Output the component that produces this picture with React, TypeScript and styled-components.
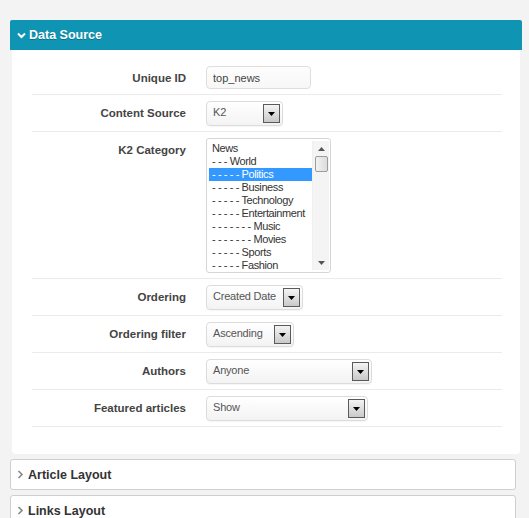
import React from 'react';
import styled, { createGlobalStyle } from 'styled-components';

const GlobalStyle = createGlobalStyle`
  html, body {
    margin: 0;
    padding: 0;
    background: #f3f3f3;
    font-family: "Liberation Sans", Arial, sans-serif;
  }
`;

const Page = styled.div`
  padding: 20px 7px 0 10px;
  height: 518px;
  overflow: hidden;
  box-sizing: border-box;
`;

const SectionHeader = styled.div`
  height: 30px;
  background: #1094b3;
  border-radius: 2px 2px 0 0;
  display: flex;
  align-items: center;
  gap: 3px;
  padding-left: 7px;
  color: #fff;
  font-weight: bold;
  font-size: 12.5px;
  text-shadow: 0 1px 0 rgba(0, 0, 0, 0.25);
`;

const SectionBody = styled.div`
  margin: 0 2px;
  background: #fff;
  border-radius: 0 0 4px 4px;
  padding: 10px 18px 27px 20px;
`;

const Row = styled.div`
  display: grid;
  grid-template-columns: 154px 1fr;
  column-gap: 20px;
  align-items: start;
  padding: 6px 0 5px;
  border-bottom: 1px solid #ebebeb;
`;

const Label = styled.div`
  text-align: right;
  font-weight: bold;
  font-size: 11.5px;
  line-height: 14px;
  color: #444;
  padding-top: 5px;
`;

const TextInput = styled.div`
  width: 105px;
  height: 23px;
  box-sizing: border-box;
  border: 1px solid #dedede;
  border-radius: 4px;
  background: linear-gradient(#fdfdfd, #f7f7f7);
  font-size: 11px;
  color: #444;
  padding: 5px 0 0 6px;
`;

const Select = styled.div<{ $width: number }>`
  width: ${p => p.$width}px;
  height: 25px;
  box-sizing: border-box;
  border: 1px solid #dcdcdc;
  border-radius: 4px;
  background: linear-gradient(#ffffff, #f3f3f3);
  box-shadow: 0 1px 1px rgba(0, 0, 0, 0.04);
  display: flex;
  align-items: center;
  justify-content: space-between;
  padding: 0 2px 0 6px;
  font-size: 11px;
  letter-spacing: -0.2px;
  color: #555;
`;

const SelectValue = styled.span`
  margin-top: -3px;
`;

const DropButton = styled.div`
  width: 17px;
  height: 19px;
  box-sizing: border-box;
  border: 1px solid #5a5a5a;
  background: linear-gradient(#f4f4f4, #c9c9c9);
  display: flex;
  align-items: center;
  justify-content: center;
`;

const ListBox = styled.div`
  width: 125px;
  height: 135px;
  box-sizing: border-box;
  border: 1px solid #d6d6d6;
  border-radius: 3px;
  background: #fff;
  display: flex;
  padding: 2px 1px 2px 2px;
`;

const ListItems = styled.div`
  flex: 1;
  overflow: hidden;
  padding-top: 1px;
`;

const ListItem = styled.div<{ $selected?: boolean }>`
  height: 13px;
  line-height: 13px;
  font-size: 11px;
  letter-spacing: -0.4px;
  padding-left: 3px;
  white-space: nowrap;
  color: ${p => (p.$selected ? '#fff' : '#333')};
  background: ${p => (p.$selected ? '#3399ff' : 'transparent')};
`;

const ScrollBar = styled.div`
  width: 16px;
  background: #f4f4f4;
  border-left: 1px solid #f0f0f0;
  display: flex;
  flex-direction: column;
  align-items: center;
`;

const ScrollArrow = styled.div`
  height: 15px;
  display: flex;
  align-items: center;
  justify-content: center;
`;

const ScrollThumb = styled.div`
  width: 13px;
  height: 16px;
  box-sizing: border-box;
  border: 1px solid #9c9c9c;
  border-radius: 2px;
  background: linear-gradient(90deg, #f2f2f2, #dcdcdc);
`;

const ScrollTrack = styled.div`
  flex: 1;
`;

const CollapsedPanel = styled.div`
  margin: 5px 6px 0 0;
  height: 31px;
  box-sizing: border-box;
  border: 1px solid #cfcfcf;
  border-radius: 3px;
  background: #fff;
  display: flex;
  align-items: center;
  gap: 4px;
  padding-left: 6px;
  font-weight: bold;
  font-size: 12.5px;
  color: #333;
`;

const ChevronDown = () => (
  <svg width="9" height="7" viewBox="0 0 9 7">
    <polyline points="1,1.5 4.5,5 8,1.5" fill="none" stroke="#fff" strokeWidth="2" />
  </svg>
);

const ChevronRight = () => (
  <svg width="7" height="9" viewBox="0 0 7 9">
    <polyline points="1.5,1 5,4.5 1.5,8" fill="none" stroke="#888" strokeWidth="1.6" />
  </svg>
);

const Triangle = ({ up, color = '#000' }: { up?: boolean; color?: string }) => (
  <svg width="7" height="4" viewBox="0 0 7 4">
    <polygon points={up ? '0,4 7,4 3.5,0' : '0,0 7,0 3.5,4'} fill={color} />
  </svg>
);

const SelectBox = ({ value, width }: { value: string; width: number }) => (
  <Select $width={width}>
    <SelectValue>{value}</SelectValue>
    <DropButton>
      <Triangle />
    </DropButton>
  </Select>
);

const categories = [
  'News',
  '- - - World',
  '- - - - - Politics',
  '- - - - - Business',
  '- - - - - Technology',
  '- - - - - Entertainment',
  '- - - - - - - Music',
  '- - - - - - - Movies',
  '- - - - - Sports',
  '- - - - - Fashion',
];

export default function App() {
  return (
    <>
      <GlobalStyle />
      <Page>
        <SectionHeader>
          <ChevronDown />
          Data Source
        </SectionHeader>
        <SectionBody>
          <Row>
            <Label>Unique ID</Label>
            <TextInput>top_news</TextInput>
          </Row>
          <Row>
            <Label>Content Source</Label>
            <SelectBox value="K2" width={77} />
          </Row>
          <Row>
            <Label>K2 Category</Label>
            <ListBox>
              <ListItems>
                {categories.map(c => (
                  <ListItem key={c} $selected={c.endsWith('Politics')}>
                    {c}
                  </ListItem>
                ))}
              </ListItems>
              <ScrollBar>
                <ScrollArrow>
                  <Triangle up color="#555" />
                </ScrollArrow>
                <ScrollThumb />
                <ScrollTrack />
                <ScrollArrow>
                  <Triangle color="#555" />
                </ScrollArrow>
              </ScrollBar>
            </ListBox>
          </Row>
          <Row>
            <Label>Ordering</Label>
            <SelectBox value="Created Date" width={97} />
          </Row>
          <Row>
            <Label>Ordering filter</Label>
            <SelectBox value="Ascending" width={88} />
          </Row>
          <Row>
            <Label>Authors</Label>
            <SelectBox value="Anyone" width={166} />
          </Row>
          <Row>
            <Label>Featured articles</Label>
            <SelectBox value="Show" width={162} />
          </Row>
        </SectionBody>
        <CollapsedPanel>
          <ChevronRight />
          Article Layout
        </CollapsedPanel>
        <CollapsedPanel>
          <ChevronRight />
          Links Layout
        </CollapsedPanel>
      </Page>
    </>
  );
}
